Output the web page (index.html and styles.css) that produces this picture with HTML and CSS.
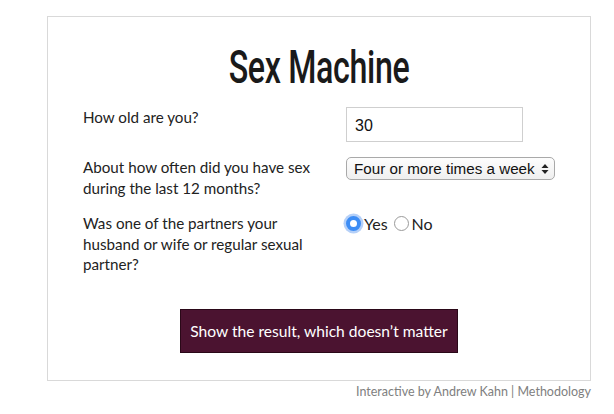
FILE: index.html
```html
<!DOCTYPE html>
<html>
<head>
<meta charset="utf-8">
<link rel="stylesheet" href="styles.css">
</head>
<body>
<div class="page">
  <div class="card">
    <h1 class="title"><span class="title-text">Sex Machine</span></h1>
    <form class="form">
      <div class="row">
        <label class="label" for="age">How old are you?</label>
        <div class="control"><input id="age" class="text-input" type="text" value="30"></div>
      </div>
      <div class="row">
        <label class="label" for="freq">About how often did you have sex during the last 12 months?</label>
        <div class="control">
          <div class="select-wrap">
            <select id="freq" class="select"><option>Four or more times a week</option></select>
            <svg class="select-arrows" width="8" height="12" viewBox="0 0 8 12"><path d="M4 1 L7.5 5 H0.5 Z M4 11 L7.5 7 H0.5 Z" fill="#222"/></svg>
          </div>
        </div>
      </div>
      <div class="row">
        <div class="label">Was one of the partners your husband or wife or regular sexual partner?</div>
        <div class="control radios">
          <label class="radio-opt"><input type="radio" name="p" class="radio" checked>Yes</label>
          <label class="radio-opt"><input type="radio" name="p" class="radio">No</label>
        </div>
      </div>
      <div class="actions">
        <button type="button" class="button">Show the result, which doesn’t matter</button>
      </div>
    </form>
  </div>
  <div class="credit">Interactive by Andrew Kahn | Methodology</div>
</div>
</body>
</html>
```

FILE: styles.css
```css
* { box-sizing: border-box; }
html, body { margin: 0; padding: 0; background: #fff; }
body { font-family: Lato, "Open Sans", sans-serif; color: #222; }
.page { width: 614px; padding: 16px 0 0 47px; }
.card {
  width: 544px;
  height: 365px;
  border: 1px solid #d9d9d9;
  padding: 0 35px;
}
.title {
  margin: 24px 0 0;
  font-family: Roboto, sans-serif;
  font-weight: 500;
  font-size: 46px;
  line-height: 52px;
  text-align: center;
  color: #1a1a1a;
}
.title-text {
  display: inline-block;
  transform: scaleX(0.7);
  letter-spacing: -0.5px;
}
.form { margin-top: 14px; }
.row {
  display: grid;
  grid-template-columns: 263px 1fr;
  margin-bottom: 15px;
}
.label {
  font-size: 15.2px;
  line-height: 20.5px;
  color: #222;
  padding-right: 20px;
}
.text-input {
  width: 177px;
  height: 35px;
  border: 1px solid #cfcfcf;
  padding: 2px 8px 0;
  font-family: "Liberation Sans", Arial, sans-serif;
  font-size: 16px;
  color: #111;
  outline: none;
}
.select-wrap { position: relative; width: 209px; height: 23px; }
.select {
  appearance: none;
  -webkit-appearance: none;
  width: 209px;
  height: 23px;
  border: 1px solid #a9a9a9;
  border-radius: 5px;
  background: linear-gradient(#fdfdfd, #efefef);
  padding: 0 0 0 7px;
  font-family: "Liberation Sans", Arial, sans-serif;
  font-size: 15.2px;
  color: #111;
}
.select-arrows { position: absolute; right: 6px; top: 6px; }
.radios { display: flex; gap: 6px; align-items: center; height: 20px; }
.radio-opt {
  display: flex;
  align-items: center;
  font-size: 16px;
  color: #222;
}
.radio {
  appearance: none;
  -webkit-appearance: none;
  width: 15px;
  height: 15px;
  margin: 0 3px 0 0;
  border: 1px solid #9a9a9a;
  border-radius: 50%;
  background: #fff;
}
.radio:checked {
  border: 4.5px solid #3d8df5;
  background: #fff;
  box-shadow: 0 0 0 2.5px rgba(90, 150, 240, 0.45);
}
.actions { display: flex; justify-content: center; margin-top: 34px; }
.button {
  width: 278px;
  height: 44px;
  border: 1px solid #2a0818;
  background: #4b1330;
  color: #fff;
  font-family: Lato, "Open Sans", sans-serif;
  font-size: 15.6px;
  padding: 0;
}
.credit {
  width: 544px;
  text-align: right;
  font-size: 12.5px;
  color: #808080;
  margin-top: 3px;
}
```
